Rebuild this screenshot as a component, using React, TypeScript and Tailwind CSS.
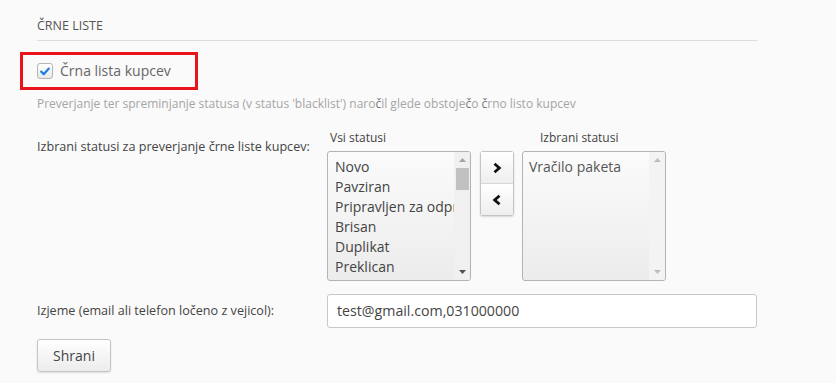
import React from "react";

const allStatuses = ["Novo", "Pavziran", "Pripravljen za odpremo", "Brisan", "Duplikat", "Preklican"];

function UpArrow({ color }: { color: string }) {
  return (
    <svg width="7" height="4" viewBox="0 0 7 4">
      <polygon points="0,4 3.5,0 7,4" fill={color} />
    </svg>
  );
}
function DownArrow({ color }: { color: string }) {
  return (
    <svg width="7" height="4" viewBox="0 0 7 4">
      <polygon points="0,0 7,0 3.5,4" fill={color} />
    </svg>
  );
}

export default function App() {
  return (
    <div className="w-[836px] h-[383px] bg-[#fafafa] font-['Open_Sans',sans-serif] pt-[17px] pl-[37px]">
      <div className="w-[720px]">
        <div className="text-[12.5px] leading-[17px] text-[#555] uppercase border-b border-[#dcdcdc] pb-[6px]">
          Črne liste
        </div>

        <div className="mt-[11px] -ml-[17px] w-[178px] h-[38px] border-[3px] border-[#e8141c] flex items-center pl-[14px]">
          <div className="w-[16px] h-[16px] rounded-[3px] border border-[#b5b5b5] bg-gradient-to-b from-white to-[#e9e9e9] flex items-center justify-center">
            <svg width="10" height="9" viewBox="0 0 10 9">
              <path d="M1.2 4.6 L3.8 7.2 L8.8 1.6" stroke="#1f7fe0" strokeWidth="2.2" fill="none" strokeLinecap="round" strokeLinejoin="round" />
            </svg>
          </div>
          <span className="ml-[7px] text-[14px] text-[#666] leading-[20px]">Črna lista kupcev</span>
        </div>

        <div className="mt-[6px] text-[12px] leading-[16px] text-[#a5a5a5]">
          Preverjanje ter spreminjanje statusa (v status 'blacklist') naro<span className="text-[#777]">č</span>il glede obstoje<span className="text-[#777]">č</span>o <span className="text-[#777]">č</span>rno listo kupcev
        </div>

        <div className="mt-[18px] flex">
          <div className="w-[290px] pt-[9px] text-[12.6px] leading-[16px] text-[#444]">
            Izbrani statusi za preverjanje črne liste kupcev:
          </div>
          <div className="flex">
            <div className="flex flex-col">
              <div className="h-[17px] pl-[3px] text-[12px] leading-[16px] text-[#444]">Vsi statusi</div>
              <div className="mt-[4px] w-[144px] h-[130px] border border-[#b3b3b3] rounded-[3px] bg-gradient-to-b from-[#fbfbfb] to-[#ececec] flex overflow-hidden">
                <div className="flex-1 pt-[5px] pl-[7px] overflow-hidden">
                  {allStatuses.map((s) => (
                    <div key={s} className="text-[14px] leading-[20px] text-[#444] whitespace-nowrap">
                      {s}
                    </div>
                  ))}
                </div>
                <div className="w-[16px] bg-[#f0f0f0] flex flex-col items-center">
                  <div className="h-[16px] flex items-center justify-center">
                    <UpArrow color="#a3a3a3" />
                  </div>
                  <div className="w-[13px] h-[22px] bg-[#c1c1c1]" />
                  <div className="flex-1" />
                  <div className="h-[16px] flex items-center justify-center">
                    <DownArrow color="#505050" />
                  </div>
                </div>
              </div>
            </div>

            <div className="ml-[9px] mt-[21px] w-[34px] h-[65px] border border-[#c4c4c4] rounded-[3px] shadow-[0_1px_2px_rgba(0,0,0,0.15)] bg-[#f6f6f6] flex flex-col">
              <div className="h-[32px] flex items-center justify-center border-b border-[#d6d6d6] bg-gradient-to-b from-white to-[#eeeeee]">
                <svg width="10" height="12" viewBox="0 0 10 12">
                  <path d="M2.5 1.8 L7.3 6 L2.5 10.2" stroke="#111" strokeWidth="2.8" fill="none" strokeLinejoin="miter" />
                </svg>
              </div>
              <div className="flex-1 flex items-center justify-center bg-gradient-to-b from-white to-[#eeeeee]">
                <svg width="10" height="12" viewBox="0 0 10 12">
                  <path d="M7.5 1.8 L2.7 6 L7.5 10.2" stroke="#111" strokeWidth="2.8" fill="none" strokeLinejoin="miter" />
                </svg>
              </div>
            </div>

            <div className="ml-[8px] flex flex-col">
              <div className="h-[17px] pl-[18px] text-[12px] leading-[16px] text-[#444]">Izbrani statusi</div>
              <div className="mt-[4px] w-[144px] h-[130px] border border-[#b3b3b3] rounded-[3px] bg-gradient-to-b from-[#fbfbfb] to-[#ececec] flex overflow-hidden">
                <div className="flex-1 pt-[5px] pl-[6px]">
                  <div className="text-[14px] leading-[20px] text-[#555] whitespace-nowrap">Vračilo paketa</div>
                </div>
                <div className="w-[16px] bg-[#f3f3f3] flex flex-col items-center">
                  <div className="h-[16px] flex items-center justify-center">
                    <UpArrow color="#bcbcbc" />
                  </div>
                  <div className="flex-1" />
                  <div className="h-[16px] flex items-center justify-center">
                    <DownArrow color="#bcbcbc" />
                  </div>
                </div>
              </div>
            </div>
          </div>
        </div>

        <div className="mt-[13px] flex items-center">
          <div className="w-[290px] text-[12.6px] leading-[16px] text-[#444]">Izjeme (email ali telefon ločeno z vejicol):</div>
          <div className="w-[430px] h-[34px] border border-[#c8c8c8] rounded-[3px] bg-white flex items-center pl-[9px] text-[14.2px] text-[#444]">
            test@gmail.com,031000000
          </div>
        </div>

        <div className="mt-[11px] w-[74px] h-[33px] border border-[#c4c4c4] rounded-[3px] bg-gradient-to-b from-white to-[#ececec] shadow-[0_1px_2px_rgba(0,0,0,0.12)] flex items-center justify-center text-[14px] text-[#444]">
          Shrani
        </div>
      </div>
    </div>
  );
}
